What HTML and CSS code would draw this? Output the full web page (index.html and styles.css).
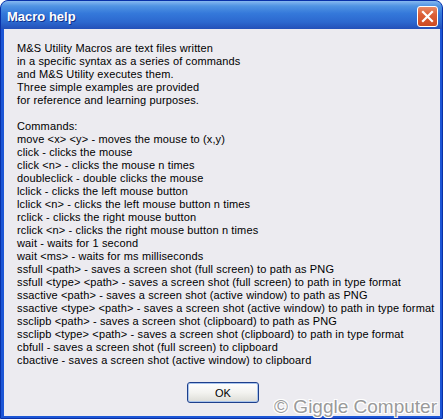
FILE: index.html
```html
<!DOCTYPE html>
<html lang="en">
<head>
  <meta charset="UTF-8" />
  <title>Macro help</title>
  <link rel="stylesheet" href="styles.css">
</head>
<body>
  <div class="window">
    <div class="titlebar">
      <div class="title">Macro help</div>
      <div class="close-btn">
        <svg width="13" height="13" viewBox="0 0 13 13">
          <path d="M2 2L11 11M11 2L2 11" stroke="#ffffff" stroke-width="2.2" stroke-linecap="square"/>
        </svg>
      </div>
    </div>
    <div class="client">
      <div class="help-text">
        <p>M&amp;S Utility Macros are text files written</p>
        <p>in a specific syntax as a series of commands</p>
        <p>and M&amp;S Utility executes them.</p>
        <p>Three simple examples are provided</p>
        <p>for reference and learning purposes.</p>
        <p>&nbsp;</p>
        <p>Commands:</p>
        <p>move &lt;x&gt; &lt;y&gt; - moves the mouse to (x,y)</p>
        <p>click - clicks the mouse</p>
        <p>click &lt;n&gt; - clicks the mouse n times</p>
        <p>doubleclick - double clicks the mouse</p>
        <p>lclick - clicks the left mouse button</p>
        <p>lclick &lt;n&gt; - clicks the left mouse button n times</p>
        <p>rclick - clicks the right mouse button</p>
        <p>rclick &lt;n&gt; - clicks the right mouse button n times</p>
        <p>wait - waits for 1 second</p>
        <p>wait &lt;ms&gt; - waits for ms milliseconds</p>
        <p>ssfull &lt;path&gt; - saves a screen shot (full screen) to path as PNG</p>
        <p>ssfull &lt;type&gt; &lt;path&gt; - saves a screen shot (full screen) to path in type format</p>
        <p>ssactive &lt;path&gt; - saves a screen shot (active window) to path as PNG</p>
        <p>ssactive &lt;type&gt; &lt;path&gt; - saves a screen shot (active window) to path in type format</p>
        <p>ssclipb &lt;path&gt; - saves a screen shot (clipboard) to path as PNG</p>
        <p>ssclipb &lt;type&gt; &lt;path&gt; - saves a screen shot (clipboard) to path in type format</p>
        <p>cbfull - saves a screen shot (full screen) to clipboard</p>
        <p>cbactive - saves a screen shot (active window) to clipboard</p>
      </div>
      <div class="footer">
        <button class="btn" type="button">OK</button>
      </div>
    </div>
    <div class="watermark">&copy; Giggle Computer</div>
  </div>
</body>
</html>
```

FILE: styles.css
```css
* {
  margin: 0;
  padding: 0;
  box-sizing: border-box;
}
body {
  width: 443px;
  height: 419px;
  background-color: #ffffff;
  font-family: 'Liberation Sans', Arial, sans-serif;
}

.window {
  position: relative;
  width: 443px;
  height: 419px;
  display: flex;
  flex-direction: column;
  background-color: #1c56d6;
  border: 1px solid #0831a8;
  border-radius: 8px 8px 0 0;
  overflow: hidden;
}

.titlebar {
  height: 28px;
  display: flex;
  align-items: center;
  justify-content: space-between;
  padding: 0 4px 0 6px;
  background: linear-gradient(to bottom, #86b9f0 0%, #4f93e3 18%, #3478da 45%, #2c68cf 75%, #2350b8 100%);
}

.title {
  color: #ffffff;
  font-size: 13px;
  font-weight: bold;
  text-shadow: 1px 1px 0 #10308a;
  margin-top: 2px;
}

.close-btn {
  width: 21px;
  height: 21px;
  display: flex;
  align-items: center;
  justify-content: center;
  border: 1px solid #ffffff;
  border-radius: 3px;
  background: linear-gradient(to bottom, #e88a66 0%, #dc5f37 40%, #cc4a22 100%);
  margin-top: 2px;
}

.client {
  flex: 1;
  display: flex;
  flex-direction: column;
  margin: 0 2px 2px 3px;
  background-color: #ecebf0;
  padding: 13px 0 0 13px;
}

.help-text {
  font-size: 11px;
  line-height: 13px;
  letter-spacing: 0.13px;
  color: #000000;
  white-space: nowrap;
}

.footer {
  display: flex;
  padding-top: 15px;
  padding-left: 170px;
}

.btn {
  width: 72px;
  height: 21px;
  font-family: 'Liberation Sans', Arial, sans-serif;
  font-size: 11px;
  color: #000000;
  border: 1px solid #1d3f8c;
  border-radius: 3px;
  background: linear-gradient(to bottom, #ffffff 0%, #f3f3f0 50%, #dcdcd6 100%);
  box-shadow: inset 0 0 0 1px #a9c4ec;
}

.watermark {
  position: absolute;
  right: 5px;
  bottom: 0;
  font-family: 'Liberation Sans', Arial, sans-serif;
  font-size: 19px;
  color: #9a9a9a;
  text-shadow: -1px -1px 0 #ffffff, 1px -1px 0 #ffffff, -1px 1px 0 #ffffff, 1px 1px 0 #ffffff;
}
```
